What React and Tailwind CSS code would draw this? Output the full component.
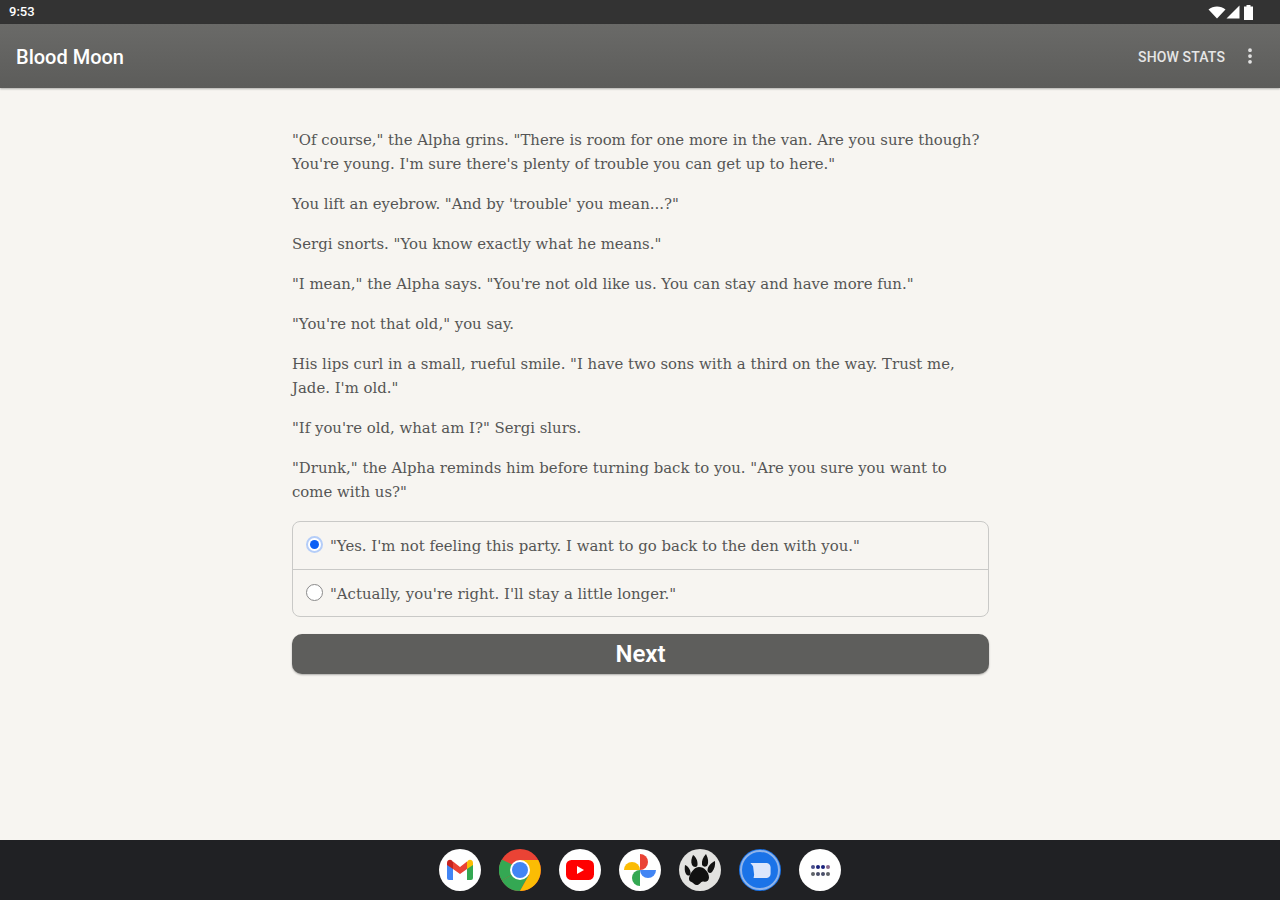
import React from "react";
import { MoreVertical } from "lucide-react";

const paragraphs = [
  `"Of course," the Alpha grins. "There is room for one more in the van. Are you sure though? You're young. I'm sure there's plenty of trouble you can get up to here."`,
  `You lift an eyebrow. "And by 'trouble' you mean...?"`,
  `Sergi snorts. "You know exactly what he means."`,
  `"I mean," the Alpha says. "You're not old like us. You can stay and have more fun."`,
  `"You're not that old," you say.`,
  `His lips curl in a small, rueful smile. "I have two sons with a third on the way. Trust me, Jade. I'm old."`,
  `"If you're old, what am I?" Sergi slurs.`,
  `"Drunk," the Alpha reminds him before turning back to you. "Are you sure you want to come with us?"`,
];

function StatusIcons() {
  return (
    <div className="flex items-center">
      <svg width="18" height="13" viewBox="0 0 18 13">
        <path d="M0.500 3.500C5 -0.500 13 -0.500 17.500 3.500L9 12.500z" fill="#fff" />
      </svg>
      <svg width="14" height="14" viewBox="0 0 14 14">
        <path d="M13.500 0.500V13.500H0.500z" fill="#fff" />
      </svg>
      <svg width="11" height="15" viewBox="0 0 11 15" className="ml-[3px]">
        <path d="M3.500 0h4v1.500H10V15H1V1.500h2.500z" fill="#fff" />
      </svg>
    </div>
  );
}

function DockCircle({ bg = "bg-white", children }) {
  return (
    <div className={`flex h-[42px] w-[42px] items-center justify-center overflow-hidden rounded-full ${bg}`}>
      {children}
    </div>
  );
}

function Gmail() {
  return (
    <DockCircle>
      <svg width="28" height="22" viewBox="0 0 28 22">
        <path d="M1 5v14a2 2 0 0 0 2 2h4V9z" fill="#4285f4" />
        <path d="M27 5v14a2 2 0 0 1-2 2h-4V9z" fill="#34a853" />
        <path d="M21 3v7l6-4V4c0-3-3-4-5-2.500z" fill="#fbbc04" />
        <path d="M7 3v7L1 6V4c0-3 3-4 5-2.500z" fill="#c5221f" />
        <path d="M7 2.500 14 8l7-5.500V10l-7 5-7-5z" fill="#ea4335" />
      </svg>
    </DockCircle>
  );
}

function Chrome() {
  return (
    <svg width="42" height="42" viewBox="0 0 42 42">
      <circle cx="21" cy="21" r="21" fill="#ea4335" />
      <path d="M21 21 2.800 31.500A21 21 0 0 1 2.800 10.500L12 15z" fill="#34a853" />
      <path d="M21 21 2.800 31.500A21 21 0 0 0 21 42L31 24z" fill="#34a853" />
      <path d="M21 11H39.200A21 21 0 0 1 21 42L30 26z" fill="#fbbc04" />
      <circle cx="21" cy="21" r="10" fill="#fff" />
      <circle cx="21" cy="21" r="8" fill="#4285f4" />
    </svg>
  );
}

function Youtube() {
  return (
    <DockCircle>
      <svg width="28" height="20" viewBox="0 0 28 20">
        <rect x="0" y="0" width="28" height="20" rx="5.500" fill="#f00" />
        <path d="M11 6l7 4-7 4z" fill="#fff" />
      </svg>
    </DockCircle>
  );
}

function Photos() {
  return (
    <DockCircle>
      <svg width="32" height="32" viewBox="0 0 32 32">
        <path d="M0 16a8 8 0 0 1 16 0z" fill="#fbbc04" />
        <path d="M16 0a8 8 0 0 1 0 16z" fill="#ea4335" />
        <path d="M32 16a8 8 0 0 1-16 0z" fill="#4285f4" />
        <path d="M16 32a8 8 0 0 1 0-16z" fill="#34a853" />
      </svg>
    </DockCircle>
  );
}

function Paw() {
  return (
    <DockCircle bg="bg-[#e2e2e0]">
      <svg width="36" height="36" viewBox="0 0 36 36">
        <path d="M3 13c3 1 6 5 5.500 9-.3 2-3 2-4.500 0C2.500 19.500 2.500 16 3 13z" fill="#111" />
        <path d="M11 3c3 2 5 6 4.500 10-.3 2.500-4 2.500-5.500 0C8.500 10 9.500 6 11 3z" fill="#111" />
        <path d="M24 2c1.500 3 3 7 1.500 11-1 2.500-5 2-5.500-.5C19.500 9 21 5 24 2z" fill="#111" />
        <path d="M33 9c.5 4-.5 8-3 11-1.500 1.800-4.500 1-4.500-1.500 0-4 3.500-7.500 7.500-9.500z" fill="#111" />
        <path d="M17 15c5 0 10 5 10 10.500 0 3.500-3 5-5.500 4-2.500-.8-3.500 3-6 3.500-3 .5-4-2.500-6-3-3-.8-3-4-1.500-7 1.500-3.500 5-8 9-8z" fill="#111" />
      </svg>
    </DockCircle>
  );
}

function Messages() {
  return (
    <DockCircle bg="bg-[#1a73e8]">
      <div className="flex h-[40px] w-[40px] items-center justify-center rounded-full border-2 border-[#8fb4ea]">
        <svg width="23" height="17" viewBox="0 0 21 16">
          <path d="M1 1h15a4 4 0 0 1 4 4v6a4 4 0 0 1-4 4H4l.5-3-1-8z" fill="#dbe6fb" />
        </svg>
      </div>
    </DockCircle>
  );
}

function Launcher() {
  const dots = ["#4a4f8a", "#1a237e", "#1a237e", "#8a6a8c", "#5f6368", "#4a4f6a", "#4a4f6a", "#5f6368"];
  return (
    <DockCircle>
      <div className="grid grid-cols-4 gap-x-[1px] gap-y-[3px]">
        {dots.map((c, i) => (
          <span key={i} className="h-[4px] w-[4px] rounded-full" style={{ backgroundColor: c }} />
        ))}
      </div>
    </DockCircle>
  );
}

export default function App() {
  return (
    <div className="flex h-[900px] w-full flex-col overflow-hidden bg-[#f7f5f1]">
      <div className="flex h-6 shrink-0 items-center justify-between bg-[#333333] pl-[9px] pr-[26px] font-['Roboto',sans-serif] text-[13px] font-medium text-white">
        <span>9:53</span>
        <StatusIcons />
      </div>

      <header className="flex h-16 shrink-0 items-center justify-between bg-gradient-to-b from-[#6a6a68] to-[#5c5c5a] pl-4 pr-5 font-['Roboto',sans-serif] text-white shadow-[0_1px_2px_rgba(0,0,0,0.3)]">
        <h1 className="mt-[2px] text-[20px] font-medium">Blood Moon</h1>
        <div className="flex items-center gap-[15px]">
          <span className="mt-[2px] text-[14px] font-medium tracking-[0.01em] text-[#e6e6e6]">SHOW STATS</span>
          <MoreVertical size={20} strokeWidth={2.5} className="text-[#e6e6e6]" />
        </div>
      </header>

      <main className="flex-1 pl-[2px] pt-10">
        <div className="mx-auto w-[698px] font-['DejaVu_Serif',serif] text-[14.9px] leading-6 text-[#555555]">
          <div className="flex flex-col gap-4">
            {paragraphs.map((p, i) => (
              <p key={i}>{p}</p>
            ))}
          </div>

          <div className="mt-[17px] w-[697px] overflow-hidden rounded-lg border border-[#c9c9c7]">
            <label className="flex h-12 items-center gap-[7px] border-b border-[#c9c9c7] pl-[13px]">
              <span className="mb-[3px] flex h-[17px] w-[17px] items-center justify-center rounded-full border-2 border-[#b4cdf8] bg-white">
                <span className="h-[9px] w-[9px] rounded-full bg-[#0b5ff5]" />
              </span>
              <span>"Yes. I'm not feeling this party. I want to go back to the den with you."</span>
            </label>
            <label className="flex h-[46px] items-center gap-[7px] pl-[13px] pt-[2px]">
              <span className="mb-[3px] h-[17px] w-[17px] rounded-full border border-[#8a8a8a] bg-white" />
              <span>"Actually, you're right. I'll stay a little longer."</span>
            </label>
          </div>

          <button className="mt-[17px] flex h-10 w-[697px] items-center justify-center rounded-[10px] bg-[#5e5e5c] font-['Roboto',sans-serif] text-[24px] font-semibold text-white shadow-[0_1px_2px_rgba(0,0,0,0.3)]">
            Next
          </button>
        </div>
      </main>

      <footer className="flex h-[60px] shrink-0 items-center justify-center gap-[18px] bg-[#202124]">
        <Gmail />
        <Chrome />
        <Youtube />
        <Photos />
        <Paw />
        <Messages />
        <Launcher />
      </footer>
    </div>
  );
}
